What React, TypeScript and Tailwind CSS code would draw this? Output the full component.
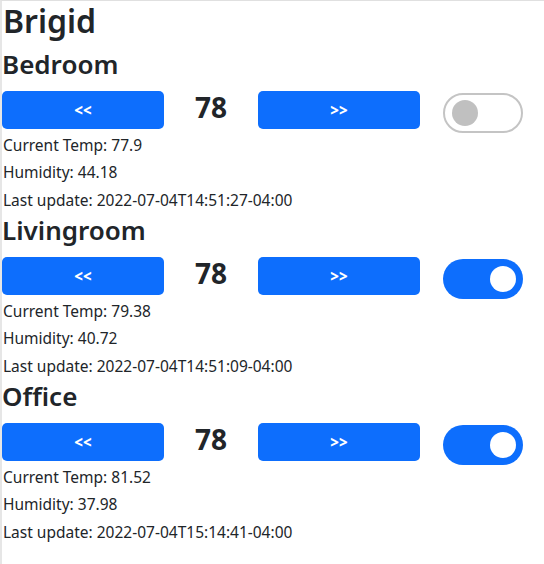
import { useState } from 'react';

type Room = {
  name: string;
  target: number;
  current: number;
  humidity: number;
  updated: string;
  on: boolean;
};

const rooms: Room[] = [
  { name: 'Bedroom', target: 78, current: 77.9, humidity: 44.18, updated: '2022-07-04T14:51:27-04:00', on: false },
  { name: 'Livingroom', target: 78, current: 79.38, humidity: 40.72, updated: '2022-07-04T14:51:09-04:00', on: true },
  { name: 'Office', target: 78, current: 81.52, humidity: 37.98, updated: '2022-07-04T15:14:41-04:00', on: true },
];

function Toggle({ on, onChange }: { on: boolean; onChange: () => void }) {
  return (
    <button
      type="button"
      onClick={onChange}
      className={`mt-[2px] ml-[23px] flex h-[40px] w-[80px] shrink-0 items-center rounded-full px-[7px] ${
        on ? 'justify-end bg-[#0d6efd]' : 'justify-start border-2 border-[#c4c4c4] bg-white px-[5px]'
      }`}
    >
      <span className={`block h-[26px] w-[26px] rounded-full ${on ? 'bg-white' : 'bg-[#c0c0c0]'}`} />
    </button>
  );
}

function RoomCard({ room }: { room: Room }) {
  const [target, setTarget] = useState(room.target);
  const [on, setOn] = useState(room.on);

  return (
    <section className="mt-[1px] first:mt-0">
      <h2 className="mb-[11px] text-[26px] leading-[31px] font-semibold">{room.name}</h2>
      <div className="flex h-[38px] items-start">
        <button
          type="button"
          onClick={() => setTarget((t) => t - 1)}
          className="h-[38px] w-[162px] shrink-0 rounded-[5px] bg-[#0d6efd] text-[15px] font-extrabold text-white"
        >
          &lt;&lt;
        </button>
        <div className="w-[94px] shrink-0 text-center text-[28px] leading-[32px] font-bold">{target}</div>
        <button
          type="button"
          onClick={() => setTarget((t) => t + 1)}
          className="h-[38px] w-[162px] shrink-0 rounded-[5px] bg-[#0d6efd] text-[15px] font-extrabold text-white"
        >
          &gt;&gt;
        </button>
        <Toggle on={on} onChange={() => setOn((v) => !v)} />
      </div>
      <div className="pt-[3px] pl-[1px] text-[15.5px] leading-[27.33px]">
        <p>Current Temp: {room.current}</p>
        <p>Humidity: {room.humidity}</p>
        <p>Last update: {room.updated}</p>
      </div>
    </section>
  );
}

export default function App() {
  return (
    <div
      className="min-h-[564px] border-t border-l-2 border-t-[#e0e0e0] border-l-[#e6e6e6] bg-white text-[#212529]"
      style={{ fontFamily: '"Noto Sans", sans-serif' }}
    >
      <h1 className="mb-[9px] pl-[1px] text-[32px] leading-[39px] font-semibold">Brigid</h1>
      {rooms.map((r) => (
        <RoomCard key={r.name} room={r} />
      ))}
    </div>
  );
}
